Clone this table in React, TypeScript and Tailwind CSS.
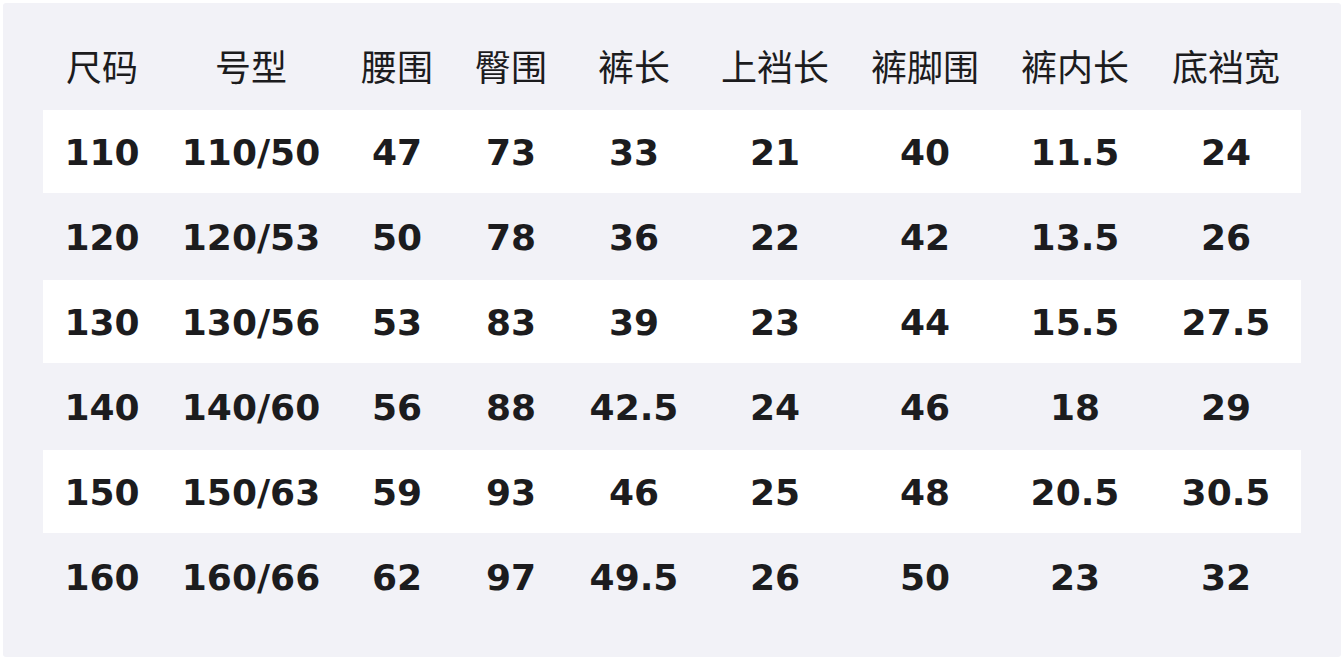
const headers = ["尺码", "号型", "腰围", "臀围", "裤长", "上裆长", "裤脚围", "裤内长", "底裆宽"];

const rows = [
  ["110", "110/50", "47", "73", "33", "21", "40", "11.5", "24"],
  ["120", "120/53", "50", "78", "36", "22", "42", "13.5", "26"],
  ["130", "130/56", "53", "83", "39", "23", "44", "15.5", "27.5"],
  ["140", "140/60", "56", "88", "42.5", "24", "46", "18", "29"],
  ["150", "150/63", "59", "93", "46", "25", "48", "20.5", "30.5"],
  ["160", "160/66", "62", "97", "49.5", "26", "50", "23", "32"],
];

const cols = "grid grid-cols-[118px_180px_112px_116px_130px_152px_148px_152px_150px]";

export default function App() {
  return (
    <div className="w-[1344px] h-[663px] bg-white p-[3px] font-['DejaVu_Sans','Noto_Sans_CJK_SC',sans-serif] text-[#1c1c1e]">
      <div className="w-[1338px] h-[654px] bg-[#f2f2f7] rounded-[3px] pl-[40px] pt-[23px]">
        <div className={`${cols} h-[84px] pb-[6px] items-center text-[36px] font-['Noto_Sans_CJK_SC',sans-serif]`}>
          {headers.map((h) => (
            <div key={h} className="text-center">
              {h}
            </div>
          ))}
        </div>
        {rows.map((r, i) => (
          <div
            key={r[0]}
            className={`${cols} w-[1258px] pt-[2px] items-center text-[36px] font-bold ${
              i % 2 === 0 ? "h-[83px] bg-white" : "h-[87px]"
            }`}
          >
            {r.map((c, j) => (
              <div key={j} className="text-center">
                {c}
              </div>
            ))}
          </div>
        ))}
      </div>
    </div>
  );
}
